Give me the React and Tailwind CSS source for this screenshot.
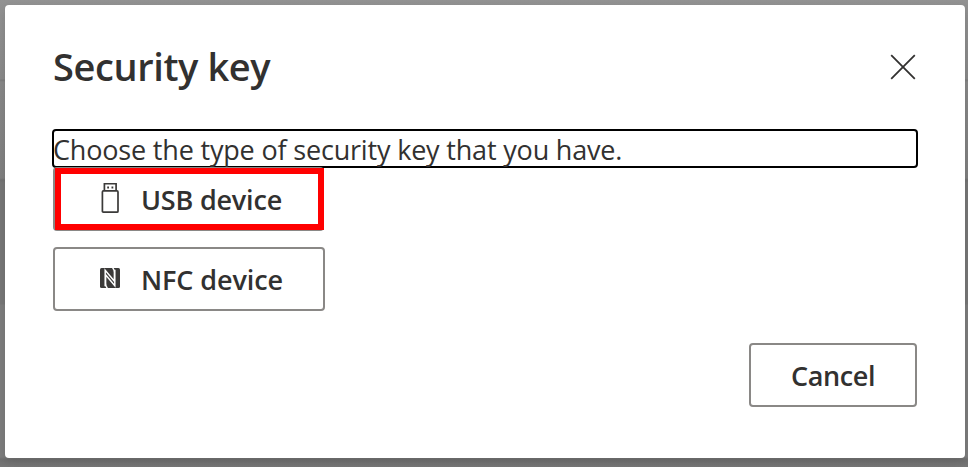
import React from "react";

const UsbIcon = () => (
  <svg className="mb-[2px]" width="20" height="32" viewBox="0 0 20 32" fill="none" stroke="#3b3a39" strokeWidth="1.7">
    <path d="M4.4 8.5V1.75h11.7V8.5" />
    <path d="M2.4 9.9Q2.4 8.9 3.4 8.9H17Q18 8.9 18 9.9V29.2Q18 30.2 17 30.2H3.4Q2.4 30.2 2.4 29.2Z" />
    <path d="M7.2 5.5h1.8M11.5 5.5h1.8" strokeWidth="2" />
  </svg>
);

const NfcIcon = () => (
  <svg className="mb-[2px]" width="20" height="20" viewBox="0 0 20 20">
    <rect width="20" height="20" rx="1.5" fill="#3b3a39" />
    <path d="M5.2 18.2V2.2L14.4 13.2V4.2Q14.4 1.6 12.6 0M14.8 1.8V17.8L5.6 6.8V15.8Q5.6 18.4 7.4 20" fill="none" stroke="#fff" strokeWidth="1.5" />
  </svg>
);

export default function App() {
  return (
    <div className="h-[467px] w-[968px] overflow-hidden bg-[linear-gradient(180deg,#929292_0px,#898989_79px,#7c7c7c_80px,#888888_82px,#808080_178px,#727272_180px,#777777_183px,#777777_304px,#7d7d7d_305px,#7d7d7d_457px,#707070_459px,#777777_467px)] p-[5px] pr-[3px] font-['Open_Sans','Noto_Sans',sans-serif] text-[#323130]">
      <main className="flex h-[453px] w-[960px] flex-col rounded-[4px] bg-white pr-[47px] pl-[47px] shadow-[0_4px_10px_rgba(0,0,0,0.12)]">
        <header className="flex h-[124px] items-start justify-between pt-[33px]">
          <h1 className="ml-[1px] text-[38px] leading-[56px] font-semibold tracking-[-0.4px] whitespace-nowrap">Security key</h1>
          <button aria-label="Close" className="mt-[16px] mr-[2px]">
            <svg width="26" height="26" viewBox="0 0 26 26" stroke="#323130" strokeWidth="1.8">
              <path d="M1.2 1.2L24.8 24.8M24.8 1.2L1.2 24.8" />
            </svg>
          </button>
        </header>
        <p className="h-[39px] w-[866px] rounded-[4px] border-2 border-black text-[27px] leading-[38px] tracking-[-0.18px] whitespace-nowrap">
          <span className="-ml-px">Choose the type of security key that you have.</span>
        </p>
        <div className="mt-[-1px] ml-[1px] h-[64px] w-[271px] rounded-[4px] bg-[#8a8886] pl-[2px] pb-[1px] pt-[1px]">
          <button className="flex h-[62px] w-[269px] items-center border-6 border-[#ff0000] bg-white pl-[39px] text-[27px] font-semibold tracking-[-0.2px] whitespace-nowrap">
            <UsbIcon />
            <span className="mt-[2px] ml-[21px] leading-[38px]">USB device</span>
          </button>
        </div>
        <button className="mt-4 ml-[1px] flex h-[64px] w-[272px] items-center rounded-[4px] border-2 border-[#8a8886] pl-[45px] text-[27px] font-semibold tracking-[-0.1px] whitespace-nowrap">
          <NfcIcon />
          <span className="mt-[2px] ml-[21px] leading-[38px]">NFC device</span>
        </button>
        <button className="mt-8 mr-[1px] h-[64px] w-[168px] self-end rounded-[4px] border-2 border-[#8a8886] pt-[2px] text-[27px] leading-[38px] font-semibold tracking-[-0.4px]">
          Cancel
        </button>
      </main>
    </div>
  );
}
